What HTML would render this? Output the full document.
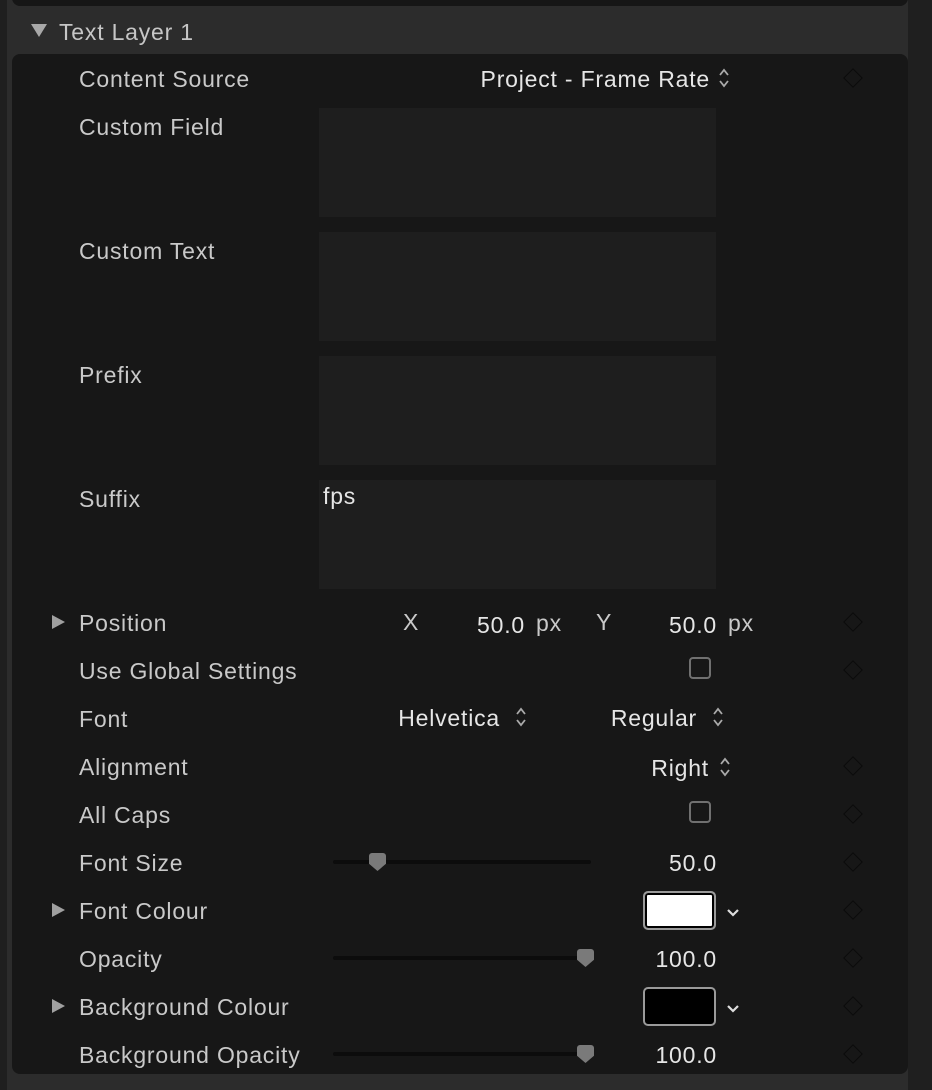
<!DOCTYPE html>
<html><head><meta charset="utf-8"><style>
*{margin:0;padding:0;box-sizing:border-box}
body{width:932px;height:1090px;background:#1f1f1f;position:relative;overflow:hidden;font-family:"Liberation Sans",Arial,sans-serif;}
.a{position:absolute}
.outer{left:7px;top:0;width:901px;height:1090px;background:#2c2c2c}
.toppanel{left:12px;top:-10px;width:896px;height:16px;background:#161616;border-radius:0 0 8px 8px}
.inner{left:12px;top:54px;width:896px;height:1020px;background:#171717;border-radius:8px}
.lbl{position:absolute;left:79px;font-size:23px;letter-spacing:0.8px;color:#c9c9c9;line-height:24px;white-space:nowrap}
.val{position:absolute;font-size:23px;letter-spacing:0.8px;color:#e6e6e6;line-height:24px;white-space:nowrap}
.r{text-align:right}
.box{position:absolute;left:319px;width:397px;height:109px;background:#1e1e1e}
.dia{position:absolute;left:846px;width:14px;height:14px;border:1.5px solid #0a0a0a;transform:rotate(45deg)}
.cb{position:absolute;left:689px;width:22px;height:22px;border:2px solid #707070;border-radius:4px}
.track{position:absolute;left:333px;width:258px;height:4px;background:#0c0c0c;border-radius:2px}
.thumb{position:absolute;width:17px;height:18px;background:#7a7a7a;clip-path:polygon(0 0,100% 0,100% 60%,50% 100%,0 60%);border-radius:3px 3px 0 0}
.well{position:absolute;left:643px;width:73px;height:39px;border:2px solid #9a9a9a;border-radius:5px}
.tri{position:absolute;left:52px;width:0;height:0;border-top:7px solid transparent;border-bottom:7px solid transparent;border-left:13px solid #a0a0a0}
</style></head><body>
<div class="a outer"></div>
<div class="a toppanel"></div>
<div class="a" style="left:31px;top:24px;width:0;height:0;border-left:8px solid transparent;border-right:8px solid transparent;border-top:13px solid #a8a8a8"></div>
<div class="lbl" style="left:59px;top:20px;color:#c6c6c6">Text Layer 1</div>
<div class="a inner"></div>

<div class="lbl" style="top:67px">Content Source</div>
<div class="val r" style="right:222px;top:67px">Project - Frame Rate</div>
<svg class="a" style="left:717px;top:67px" width="14" height="22"><path d="M3 8 L7 3 L11 8 M3 14 L7 19 L11 14" stroke="#aaa" stroke-width="1.8" fill="none"/></svg>
<div class="dia" style="top:71px"></div>

<div class="lbl" style="top:115px">Custom Field</div><div class="box" style="top:108px"></div>
<div class="lbl" style="top:239px">Custom Text</div><div class="box" style="top:232px"></div>
<div class="lbl" style="top:363px">Prefix</div><div class="box" style="top:356px"></div>
<div class="lbl" style="top:487px">Suffix</div><div class="box" style="top:480px"></div>
<div class="val" style="left:323px;top:484px">fps</div>

<div class="tri" style="top:615px"></div>
<div class="lbl" style="top:611px">Position</div>
<div class="val" style="left:403px;top:610px;color:#c9c9c9">X</div>
<div class="val r" style="right:407px;top:613px">50.0</div>
<div class="val" style="left:536px;top:611px;color:#c9c9c9">px</div>
<div class="val" style="left:596px;top:610px;color:#c9c9c9">Y</div>
<div class="val r" style="right:215px;top:613px">50.0</div>
<div class="val" style="left:728px;top:611px;color:#c9c9c9">px</div>
<div class="dia" style="top:615px"></div>

<div class="lbl" style="top:659px">Use Global Settings</div>
<div class="cb" style="top:657px"></div>
<div class="dia" style="top:663px"></div>

<div class="lbl" style="top:707px">Font</div>
<div class="val r" style="right:432px;top:706px">Helvetica</div>
<svg class="a" style="left:514px;top:706px" width="14" height="22"><path d="M3 8 L7 3 L11 8 M3 14 L7 19 L11 14" stroke="#aaa" stroke-width="1.8" fill="none"/></svg>
<div class="val r" style="right:235px;top:706px">Regular</div>
<svg class="a" style="left:711px;top:706px" width="14" height="22"><path d="M3 8 L7 3 L11 8 M3 14 L7 19 L11 14" stroke="#aaa" stroke-width="1.8" fill="none"/></svg>

<div class="lbl" style="top:755px">Alignment</div>
<div class="val r" style="right:223px;top:756px">Right</div>
<svg class="a" style="left:718px;top:756px" width="14" height="22"><path d="M3 8 L7 3 L11 8 M3 14 L7 19 L11 14" stroke="#aaa" stroke-width="1.8" fill="none"/></svg>
<div class="dia" style="top:759px"></div>

<div class="lbl" style="top:803px">All Caps</div>
<div class="cb" style="top:801px"></div>
<div class="dia" style="top:807px"></div>

<div class="lbl" style="top:851px">Font Size</div>
<div class="track" style="top:860px"></div>
<div class="thumb" style="left:369px;top:853px"></div>
<div class="val r" style="right:215px;top:851px">50.0</div>
<div class="dia" style="top:855px"></div>

<div class="tri" style="top:903px"></div>
<div class="lbl" style="top:899px">Font Colour</div>
<div class="well" style="top:891px;background:#fff;box-shadow:inset 0 0 0 2px #000"></div>
<svg class="a" style="left:726px;top:907px" width="14" height="12"><path d="M2 3 L7 8 L12 3" stroke="#ddd" stroke-width="2.2" fill="none"/></svg>
<div class="dia" style="top:903px"></div>

<div class="lbl" style="top:947px">Opacity</div>
<div class="track" style="top:956px"></div>
<div class="thumb" style="left:577px;top:949px"></div>
<div class="val r" style="right:215px;top:947px">100.0</div>
<div class="dia" style="top:951px"></div>

<div class="tri" style="top:999px"></div>
<div class="lbl" style="top:995px">Background Colour</div>
<div class="well" style="top:987px;background:#000"></div>
<svg class="a" style="left:726px;top:1003px" width="14" height="12"><path d="M2 3 L7 8 L12 3" stroke="#ddd" stroke-width="2.2" fill="none"/></svg>
<div class="dia" style="top:999px"></div>

<div class="lbl" style="top:1043px">Background Opacity</div>
<div class="track" style="top:1052px"></div>
<div class="thumb" style="left:577px;top:1045px"></div>
<div class="val r" style="right:215px;top:1043px">100.0</div>
<div class="dia" style="top:1047px"></div>
</body></html>
